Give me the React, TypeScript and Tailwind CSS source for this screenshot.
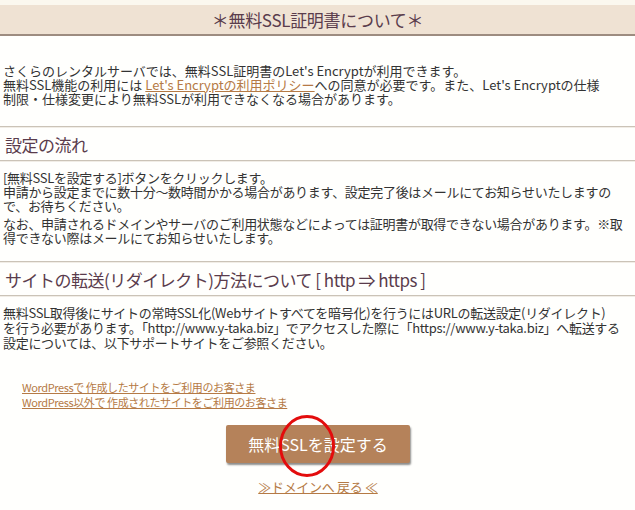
import React from "react";

const FONT = {
  fontFamily: '"MS UI Gothic", "Noto Sans CJK JP", "Liberation Sans", sans-serif',
};

function Rule() {
  return <div className="h-[2px] border-t border-[#cbc3b7] bg-[#f1ede6]" />;
}

function SectionHeading({ children }: { children: React.ReactNode }) {
  return (
    <>
      <Rule />
      <h2 className="flex h-[32px] items-center px-[5px] text-[17px] leading-none tracking-[-0.5px] whitespace-nowrap text-[#5a3c4c]">
        {children}
      </h2>
      <Rule />
    </>
  );
}

export default function App() {
  return (
    <div
      className="relative h-[510px] w-[635px] overflow-hidden bg-[#fffffd] text-[13px] text-[#333333]"
      style={FONT}
    >
      {/* タイトル */}
      <div className="h-[5px] bg-[#fbf8ef]" />
      <div className="flex h-[31px] items-center justify-center border-b-2 border-[#9d8c80] bg-[#efe2d3]">
        <h1 className="text-[17px] leading-none tracking-[-0.3px] text-[#5a3c4c]">
          ＊無料SSL証明書について＊
        </h1>
      </div>

      {/* 概要 */}
      <div className="px-[3px] pt-[28px] pb-[20px] leading-[14px] whitespace-nowrap">
        <p>さくらのレンタルサーバでは、無料SSL証明書のLet's Encryptが利用できます。</p>
        <p>
          無料SSL機能の利用には{" "}
          <a href="#" className="text-[#b57a45] underline">
            Let's Encryptの利用ポリシー
          </a>
          への同意が必要です。また、Let's Encryptの仕様
          <br />
          制限・仕様変更により無料SSLが利用できなくなる場合があります。
        </p>
      </div>

      {/* 設定の流れ */}
      <SectionHeading>設定の流れ</SectionHeading>
      <div className="px-[3px] pt-[9px] pb-[16px] leading-[14px] tracking-[-0.3px] whitespace-nowrap">
        <p>[無料SSLを設定する]ボタンをクリックします。</p>
        <p>
          申請から設定までに数十分～数時間かかる場合があります、設定完了後はメールにてお知らせいたしますの
          <br />
          で、お待ちください。
        </p>
        <p className="mt-[4px]">
          なお、申請されるドメインやサーバのご利用状態などによっては証明書が取得できない場合があります。※取
          <br />
          得できない際はメールにてお知らせいたします。
        </p>
      </div>

      {/* リダイレクト */}
      <SectionHeading>
        サイトの転送(リダイレクト)方法について [ http ⇒ https ]
      </SectionHeading>
      <div className="px-[3px] pt-[8px] leading-[15px] tracking-[-0.3px] whitespace-nowrap">
        <p>
          無料SSL取得後にサイトの常時SSL化(Webサイトすべてを暗号化)を行うにはURLの転送設定(リダイレクト)
          <br />
          を行う必要があります。「http://www.y-taka.biz」でアクセスした際に「https://www.y-taka.biz」へ転送する
          <br />
          設定については、以下サポートサイトをご参照ください。
        </p>
      </div>

      <div className="flex flex-col items-start px-[22px] pt-[30px] text-[11px] leading-[15px] tracking-[-0.4px]">
        <a href="#" className="text-[#b57a45] underline">
          WordPressで 作成したサイトをご利用のお客さま
        </a>
        <a href="#" className="text-[#b57a45] underline">
          WordPress以外で 作成されたサイトをご利用のお客さま
        </a>
      </div>

      {/* ボタン */}
      <div className="flex flex-col items-center pt-[15px] pl-[1px]">
        <div className="relative">
          <button className="h-[38px] w-[184px] rounded-[2px] bg-[#b5825a] text-[16px] text-white shadow-[1px_2px_2px_rgba(0,0,0,0.45)]">
            無料SSLを設定する
          </button>
          {/* 注釈の赤丸 */}
          <svg
            className="pointer-events-none absolute top-[-11px] left-[52px]"
            width="58"
            height="64"
            viewBox="0 0 58 64"
          >
            <ellipse cx="29" cy="32" rx="26.5" ry="29.5" fill="none" stroke="#e30c0c" strokeWidth="3" />
          </svg>
        </div>
        <a href="#" className="mt-[14px] text-[13px] tracking-[-0.3px] text-[#b57a45] underline">
          ≫ドメインへ 戻る ≪
        </a>
      </div>
    </div>
  );
}
